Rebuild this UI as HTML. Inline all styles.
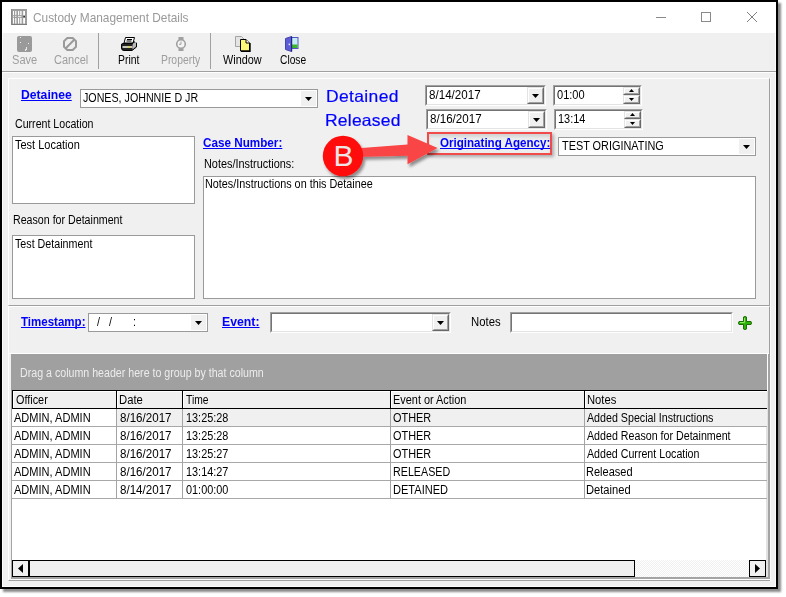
<!DOCTYPE html>
<html lang="en"><head><meta charset="utf-8"><title>Custody Management Details</title>
<style>
html,body{margin:0;padding:0;}
body{width:786px;height:597px;background:#fff;position:relative;overflow:hidden;font:11px/1 "Liberation Sans",Arial,sans-serif;}
.a{position:absolute;box-sizing:border-box;}
.t{position:absolute;white-space:pre;transform-origin:0 50%;text-underline-offset:1px;text-decoration-skip-ink:none;text-decoration-thickness:1px;}
#win{left:0;top:0;width:778px;height:589px;border:2px solid #000;background:#f0f0f0;box-shadow:3px 3px 2px rgba(0,0,0,.46);}
#title{left:2px;top:2px;width:774px;height:31px;background:#fff;}
.flat{background:#fff;border:1px solid #9a9a9a;}
.sunk{background:#fff;border:1px solid;border-color:#a0a0a0 #fff #fff #a0a0a0;}
.sunk:before{content:"";position:absolute;left:0;top:0;right:0;bottom:0;border:1px solid;border-color:#747474 #e3e3e3 #e3e3e3 #747474;}
.btn{background:#f0f0f0;border:1px solid;border-color:#e3e3e3 #696969 #696969 #e3e3e3;}
.btn:before{content:"";position:absolute;left:0;top:0;right:0;bottom:0;border:1px solid;border-color:#fff #a0a0a0 #a0a0a0 #fff;}
.arr{width:7px;height:4px;background:#000;clip-path:polygon(0 0,100% 0,50% 100%);}
.arrs{width:5px;height:3px;background:#000;}
.up{clip-path:polygon(50% 0,100% 100%,0 100%);}
.dn{clip-path:polygon(0 0,100% 0,50% 100%);}
.ddb{background:#f0f0f0;}
.panel{border:1px solid;border-color:#fff #a0a0a0 #a0a0a0 #fff;box-shadow:1px 0 0 #fbfbfb;}
.hl{background:#a8a8a8;height:1px;}
.vl{background:#a4a4a4;width:1px;}
.hc{background:#f0f0f0;border:1px solid #000;box-shadow:inset 1px 1px 0 #fff;}
.sb{background:#f0f0f0;border:1px solid #000;}

</style></head>
<body>
<div id="win" class="a"></div>
<div id="title" class="a"></div>
<div class="a" style="left:2px;top:33px;width:1px;height:554px;background:#fbfbfb"></div>
<div class="a" style="left:775px;top:33px;width:1px;height:554px;background:#fbfbfb"></div>
<div class="a" style="left:2px;top:586px;width:774px;height:1px;background:#fbfbfb"></div>

<!-- title icon : jail bars -->
<svg class="a" style="left:11px;top:9px" width="16" height="16" viewBox="0 0 16 16">
  <rect x="0" y="0" width="16" height="16" fill="#9c9c9c"/>
  <rect x="0" y="15" width="16" height="1" fill="#7c7c7c"/>
  <rect x="0" y="0" width="1" height="16" fill="#888"/>
  <g fill="#fff">
    <rect x="2" y="2" width="1" height="4.2"/><rect x="4.2" y="2" width="1.2" height="4.2"/>
    <rect x="7" y="2" width="1.2" height="4.2"/><rect x="9.2" y="2" width="1.4" height="4.2"/>
    <rect x="12.2" y="2" width="1.8" height="4.2"/>
    <rect x="2" y="9" width="1" height="5.6"/><rect x="4.2" y="9" width="1.2" height="5.6"/>
    <rect x="7" y="9" width="1.2" height="5.6"/><rect x="9.2" y="9" width="1.4" height="5.6"/>
    <rect x="12.2" y="9" width="1.8" height="5.6"/>
  </g>
  <g fill="#e4e4e4">
    <rect x="2" y="7" width="1" height="1.4"/><rect x="4" y="7" width="1.4" height="1"/>
    <rect x="7" y="7" width="3.4" height="1.2"/>
  </g>
  <rect x="12.4" y="7" width="1.6" height="1.2" fill="#303030"/>
</svg>

<!-- window controls -->
<div class="a" style="left:656px;top:17px;width:10px;height:1px;background:#8a8a8a"></div>
<div class="a" style="left:701px;top:12px;width:10px;height:10px;border:1px solid #8a8a8a"></div>
<svg class="a" style="left:746px;top:11px" width="12" height="12" viewBox="0 0 12 12"><path d="M1 1 L11 11 M11 1 L1 11" stroke="#808080" stroke-width="1" fill="none"/></svg>

<!-- toolbar -->
<div class="a" style="left:2px;top:71px;width:774px;height:1px;background:#a0a0a0"></div>
<div class="a" style="left:2px;top:72px;width:774px;height:1px;background:#fff"></div>
<div class="a" style="left:98px;top:33px;width:1px;height:36px;background:#a0a0a0"></div>
<div class="a" style="left:210px;top:33px;width:1px;height:36px;background:#a0a0a0"></div>

<!-- save icon -->
<svg class="a" style="left:17px;top:36px" width="15" height="16" viewBox="0 0 15 16">
  <rect x="0" y="0" width="15" height="16" rx="2" fill="#9a9a9a"/>
  <rect x="3" y="1" width="1" height="1" fill="#f0f0f0"/><rect x="3" y="6" width="1" height="1" fill="#f0f0f0"/>
  <rect x="11" y="7" width="1" height="1" fill="#f0f0f0"/><rect x="9" y="11" width="1" height="3" fill="#e8e8e8"/>
  <rect x="8" y="13" width="1" height="2" fill="#e8e8e8"/>
</svg>
<!-- cancel icon -->
<svg class="a" style="left:63px;top:37px" width="14" height="14" viewBox="0 0 14 14">
  <path d="M4.3 1 H9.7 L13 4.3 V9.7 L9.7 13 H4.3 L1 9.7 V4.3 Z" fill="none" stroke="#9a9a9a" stroke-width="2" stroke-linejoin="round"/>
  <path d="M2.8 11.2 L11.2 2.8" stroke="#9a9a9a" stroke-width="2"/>
</svg>
<!-- print icon -->
<svg class="a" style="left:121px;top:37px" width="16" height="15" viewBox="0 0 16 15">
  <path d="M4.5 0.5 L13.5 0.5 L12 6 L3 6 Z" fill="#fff" stroke="#000"/>
  <path d="M6 2.5 H11 M5.5 4 H10.5" stroke="#000" stroke-width="1"/>
  <path d="M1.5 6.5 Q0.5 6.5 0.5 8 L0.5 11 Q0.5 13.5 3 13.5 L11 13.5 L15.5 10 L15.5 6 L12.5 4.5 L12 6.5 Z" fill="#222" stroke="#000"/>
  <path d="M12 6.5 L15 4.8 L15 9.5 L11.5 12.5 L11.5 8 Z" fill="#b8b8b8"/>
  <rect x="1.5" y="9" width="10" height="2" fill="#c8c8c8"/>
  <rect x="6.5" y="9.5" width="3" height="1" fill="#e8e000"/>
</svg>
<!-- property (watch) icon -->
<svg class="a" style="left:175px;top:37px" width="12" height="14" viewBox="0 0 12 14">
  <rect x="3.5" y="0" width="5" height="3" fill="#a0a0a0"/>
  <rect x="3.5" y="11" width="5" height="3" fill="#a0a0a0"/>
  <circle cx="6" cy="7" r="4.3" fill="#f4f4f4" stroke="#a0a0a0" stroke-width="1.6"/>
  <path d="M6 4.5 V7.3 H4" stroke="#a0a0a0" stroke-width="1" fill="none"/>
</svg>
<!-- window icon -->
<svg class="a" style="left:235px;top:36px" width="16" height="16" viewBox="0 0 16 16">
  <path d="M0.5 0.5 H6.5 L9.5 3.5 V10.5 H0.5 Z" fill="#e4e4e4" stroke="#a4a4a4"/>
  <path d="M5.5 3.5 H11 L14.5 7 V15 H5.5 Z" fill="#fafa78" stroke="#000"/>
  <path d="M6 15.2 H15 V7" fill="none" stroke="#000" stroke-width="1.4"/>
  <path d="M11 3.5 V7 H14.5" fill="#fff" stroke="#000"/>
</svg>
<!-- close (door) icon -->
<svg class="a" style="left:285px;top:36px" width="14" height="16" viewBox="0 0 14 16">
  <rect x="6.5" y="1.5" width="6.5" height="11" fill="#c4ecf4" stroke="#5454c4"/>
  <rect x="7" y="8.5" width="5.5" height="3.5" fill="#3cb42c"/>
  <path d="M0.5 2.5 L6.5 0.5 V15.5 L0.5 13.5 Z" fill="#5c5cd4" stroke="#4444b4" stroke-width="1"/>
  <path d="M6.6 0.5 V15.5" stroke="#24247c" stroke-width="1.2"/>
  <rect x="3.6" y="7.6" width="1.4" height="1.6" fill="#e4e4ff"/>
</svg>

<!-- panels -->
<div class="a panel" style="left:8px;top:78px;width:762px;height:228px"></div>
<div class="a panel" style="left:8px;top:306px;width:762px;height:275px"></div>

<!-- detainee combo -->
<div class="a flat" style="left:80px;top:89px;width:238px;height:19px"></div>
<div class="a ddb" style="left:301px;top:91px;width:15px;height:15px"></div>
<div class="a arr" style="left:305px;top:97px"></div>

<!-- date fields -->
<div class="a sunk" style="left:425px;top:85px;width:121px;height:21px"></div>
<div class="a btn" style="left:527px;top:87px;width:17px;height:17px"></div>
<div class="a arr" style="left:532px;top:94px"></div>
<div class="a sunk" style="left:426px;top:109px;width:121px;height:21px"></div>
<div class="a btn" style="left:528px;top:111px;width:17px;height:17px"></div>
<div class="a arr" style="left:533px;top:118px"></div>

<!-- time fields -->
<div class="a sunk" style="left:553px;top:85px;width:89px;height:21px"></div>
<div class="a btn" style="left:623px;top:87px;width:17px;height:8px"></div>
<div class="a btn" style="left:623px;top:95px;width:17px;height:9px"></div>
<div class="a arrs up" style="left:629px;top:89px"></div>
<div class="a arrs dn" style="left:629px;top:98px"></div>
<div class="a sunk" style="left:554px;top:109px;width:89px;height:21px"></div>
<div class="a btn" style="left:624px;top:111px;width:17px;height:8px"></div>
<div class="a btn" style="left:624px;top:119px;width:17px;height:9px"></div>
<div class="a arrs up" style="left:630px;top:113px"></div>
<div class="a arrs dn" style="left:630px;top:122px"></div>

<!-- text areas -->
<div class="a flat" style="left:12px;top:136px;width:183px;height:68px"></div>
<div class="a flat" style="left:12px;top:235px;width:183px;height:64px"></div>
<div class="a flat" style="left:203px;top:176px;width:553px;height:123px"></div>

<!-- originating agency combo -->
<div class="a flat" style="left:558px;top:137px;width:198px;height:19px"></div>
<div class="a ddb" style="left:739px;top:139px;width:15px;height:15px"></div>
<div class="a arr" style="left:743px;top:145px"></div>

<!-- annotation -->
<div class="a" style="left:427px;top:132px;width:125px;height:23px;border:2px solid #f04a4a;background:#eceeee;box-shadow:2px 2px 3px rgba(0,0,0,.28), inset 0 3px 3px rgba(0,0,0,.10)"></div>
<svg class="a" style="left:315px;top:125px;overflow:visible" width="135" height="60" viewBox="315 125 135 60">
  <defs><filter id="ds" x="-20%" y="-20%" width="150%" height="160%"><feGaussianBlur in="SourceAlpha" stdDeviation="1.6"/><feOffset dx="2" dy="2.5"/><feComponentTransfer><feFuncA type="linear" slope=".42"/></feComponentTransfer><feMerge><feMergeNode/><feMergeNode in="SourceGraphic"/></feMerge></filter></defs>
  <g filter="url(#ds)">
    <path d="M355 148.4 L407.5 144.5 L407.5 135 L437.6 148 L407.5 164.3 L407.5 155.8 L355 157 Z" fill="#f94444"/>
    <circle cx="343" cy="156" r="20.2" fill="#ff0d0d"/>
  </g>
</svg>

<!-- timestamp row -->
<div class="a flat" style="left:88px;top:313px;width:120px;height:19px"></div>
<div class="a ddb" style="left:191px;top:315px;width:15px;height:15px"></div>
<div class="a arr" style="left:195px;top:321px"></div>
<div class="a sunk" style="left:270px;top:312px;width:181px;height:21px"></div>
<div class="a btn" style="left:432px;top:314px;width:17px;height:17px"></div>
<div class="a arr" style="left:437px;top:321px"></div>
<div class="a sunk" style="left:510px;top:312px;width:223px;height:21px"></div>
<!-- plus icon -->
<svg class="a" style="left:738px;top:316px" width="14" height="14" viewBox="0 0 14 14">
  <path d="M5.5 1 Q7 0 8.5 1 V5.5 H13 Q14 7 13 8.5 H8.5 V13 Q7 14 5.5 13 V8.5 H1 Q0 7 1 5.5 H5.5 Z" fill="#2fb40a" stroke="#1c6e04" stroke-width="1"/>
  <path d="M6.5 2 V6.5 H2" stroke="#8fe860" stroke-width="1" fill="none"/>
</svg>

<!-- grid -->
<div class="a" style="left:9px;top:353px;width:760px;height:1px;background:#fff"></div>
<div class="a" style="left:11px;top:354px;width:759px;height:225px;background:#fff;border:solid #a4a4a4;border-width:0 2px 2px 1px;box-shadow:0 1px 0 #fff"></div>
<div class="a" style="left:11px;top:354px;width:756px;height:36px;background:#a0a0a0"></div>
<div class="a" style="left:766px;top:391px;width:2px;height:186px;background:#e2e2e2"></div>
<!-- header -->
<div class="a hc" style="left:12px;top:390px;width:105px;height:19px"></div>
<div class="a hc" style="left:116px;top:390px;width:67px;height:19px"></div>
<div class="a hc" style="left:182px;top:390px;width:209px;height:19px"></div>
<div class="a hc" style="left:390px;top:390px;width:195px;height:19px"></div>
<div class="a hc" style="left:584px;top:390px;width:183px;height:19px;border-right:none"></div>
<!-- selected row bg -->
<div class="a" style="left:117px;top:409px;width:650px;height:17px;background:#f0f0f0"></div>
<!-- row lines -->
<div class="a hl" style="left:12px;top:426px;width:755px"></div>
<div class="a hl" style="left:12px;top:444px;width:755px"></div>
<div class="a hl" style="left:12px;top:462px;width:755px"></div>
<div class="a hl" style="left:12px;top:480px;width:755px"></div>
<div class="a hl" style="left:12px;top:498px;width:755px"></div>
<div class="a vl" style="left:116px;top:409px;height:90px"></div>
<div class="a vl" style="left:182px;top:409px;height:90px"></div>
<div class="a vl" style="left:390px;top:409px;height:90px"></div>
<div class="a vl" style="left:584px;top:409px;height:90px"></div>
<!-- scrollbar -->
<div class="a" style="left:12px;top:560px;width:754px;height:17px;background:repeating-conic-gradient(#f0f0f0 0% 25%, #fff 0% 50%) 0 0/2px 2px"></div>
<div class="a sb" style="left:12px;top:560px;width:17px;height:17px"></div>
<div class="a sb" style="left:29px;top:560px;width:606px;height:17px"></div>
<div class="a sb" style="left:749px;top:560px;width:17px;height:17px"></div>
<svg class="a" style="left:12px;top:560px" width="17" height="17" viewBox="0 0 17 17"><path d="M11 4 V13 L6 8.5 Z" fill="#000"/></svg>
<svg class="a" style="left:749px;top:560px" width="17" height="17" viewBox="0 0 17 17"><path d="M6 4 V13 L11 8.5 Z" fill="#000"/></svg>

<div id="texts">
<span class="t" style="left:32.70px;top:11.00px;font:13px/1 'Liberation Sans', Arial, sans-serif;color:#999;transform:scaleX(0.9121);">Custody Management Details</span>
<span class="t" style="left:11.70px;top:54.00px;font:12.5px/1 'Liberation Sans', Arial, sans-serif;color:#9d9d9d;transform:scaleX(0.8865);">Save</span>
<span class="t" style="left:53.70px;top:54.00px;font:12.5px/1 'Liberation Sans', Arial, sans-serif;color:#9d9d9d;transform:scaleX(0.8785);">Cancel</span>
<span class="t" style="left:117.76px;top:54.00px;font:12.5px/1 'Liberation Sans', Arial, sans-serif;color:#000;transform:scaleX(0.8363);">Print</span>
<span class="t" style="left:160.87px;top:54.00px;font:12.5px/1 'Liberation Sans', Arial, sans-serif;color:#9d9d9d;transform:scaleX(0.8299);">Property</span>
<span class="t" style="left:223.30px;top:54.00px;font:12.5px/1 'Liberation Sans', Arial, sans-serif;color:#000;transform:scaleX(0.8695);">Window</span>
<span class="t" style="left:279.60px;top:54.00px;font:12.5px/1 'Liberation Sans', Arial, sans-serif;color:#000;transform:scaleX(0.8186);">Close</span>
<span class="t" style="left:21.20px;top:89.00px;font:bold 12.5px/1 'Liberation Sans', Arial, sans-serif;color:#0000ff;transform:scaleX(0.9740);text-decoration:underline;">Detainee</span>
<span class="t" style="left:82.90px;top:92.00px;font:12.5px/1 'Liberation Sans', Arial, sans-serif;color:#000;transform:scaleX(0.8544);">JONES, JOHNNIE D JR</span>
<span class="t" style="left:325.84px;top:88.00px;font:16.5px/1 'Liberation Sans', Arial, sans-serif;color:#0000ff;letter-spacing:0.328px;transform:scaleX(1.0600);-webkit-text-stroke:0.2px #0000ff;">Detained</span>
<span class="t" style="left:324.84px;top:112.00px;font:16.5px/1 'Liberation Sans', Arial, sans-serif;color:#0000ff;letter-spacing:0.209px;transform:scaleX(1.0600);-webkit-text-stroke:0.2px #0000ff;">Released</span>
<span class="t" style="left:428.80px;top:89.00px;font:12.5px/1 'Liberation Sans', Arial, sans-serif;color:#000;transform:scaleX(0.9289);">8/14/2017</span>
<span class="t" style="left:429.70px;top:113.00px;font:12.5px/1 'Liberation Sans', Arial, sans-serif;color:#000;transform:scaleX(0.9289);">8/16/2017</span>
<span class="t" style="left:556.50px;top:89.00px;font:12.5px/1 'Liberation Sans', Arial, sans-serif;color:#000;transform:scaleX(0.8842);">01:00</span>
<span class="t" style="left:557.60px;top:113.00px;font:12.5px/1 'Liberation Sans', Arial, sans-serif;color:#000;transform:scaleX(0.8746);">13:14</span>
<span class="t" style="left:15.30px;top:118.00px;font:12.5px/1 'Liberation Sans', Arial, sans-serif;color:#000;transform:scaleX(0.8490);">Current Location</span>
<span class="t" style="left:15.30px;top:139.00px;font:12.5px/1 'Liberation Sans', Arial, sans-serif;color:#000;transform:scaleX(0.8792);">Test Location</span>
<span class="t" style="left:203.40px;top:137.00px;font:bold 12.5px/1 'Liberation Sans', Arial, sans-serif;color:#0000ff;transform:scaleX(0.9356);text-decoration:underline;">Case Number:</span>
<span class="t" style="left:439.80px;top:137.00px;font:bold 12.5px/1 'Liberation Sans', Arial, sans-serif;color:#0000ff;transform:scaleX(0.9265);text-decoration:underline;">Originating Agency:</span>
<span class="t" style="left:562.00px;top:140.00px;font:12.5px/1 'Liberation Sans', Arial, sans-serif;color:#000;transform:scaleX(0.8702);">TEST ORIGINATING</span>
<span class="t" style="left:203.83px;top:158.00px;font:12.5px/1 'Liberation Sans', Arial, sans-serif;color:#000;transform:scaleX(0.8722);">Notes/Instructions:</span>
<span class="t" style="left:204.83px;top:178.00px;font:12.5px/1 'Liberation Sans', Arial, sans-serif;color:#000;transform:scaleX(0.8657);">Notes/Instructions on this Detainee</span>
<span class="t" style="left:12.85px;top:214.00px;font:12.5px/1 'Liberation Sans', Arial, sans-serif;color:#000;transform:scaleX(0.8519);">Reason for Detainment</span>
<span class="t" style="left:15.30px;top:238.00px;font:12.5px/1 'Liberation Sans', Arial, sans-serif;color:#000;transform:scaleX(0.8564);">Test Detainment</span>
<span class="t" style="left:21.20px;top:316.00px;font:bold 12.5px/1 'Liberation Sans', Arial, sans-serif;color:#0000ff;transform:scaleX(0.9220);text-decoration:underline;">Timestamp:</span>
<span class="t" style="left:96.80px;top:316.00px;font:12.5px/1 'Liberation Sans', Arial, sans-serif;color:#000;transform:scaleX(0.8550);">/</span>
<span class="t" style="left:109.40px;top:316.00px;font:12.5px/1 'Liberation Sans', Arial, sans-serif;color:#000;transform:scaleX(0.8550);">/</span>
<span class="t" style="left:133.15px;top:316.00px;font:12.5px/1 'Liberation Sans', Arial, sans-serif;color:#000;transform:scaleX(0.8550);">:</span>
<span class="t" style="left:221.50px;top:316.00px;font:bold 12.5px/1 'Liberation Sans', Arial, sans-serif;color:#0000ff;transform:scaleX(0.9827);text-decoration:underline;">Event:</span>
<span class="t" style="left:470.59px;top:316.00px;font:12.5px/1 'Liberation Sans', Arial, sans-serif;color:#000;transform:scaleX(0.9075);">Notes</span>
<span class="t" style="left:20.05px;top:367.00px;font:12.5px/1 'Liberation Sans', Arial, sans-serif;color:#ececec;transform:scaleX(0.8513);">Drag a column header here to group by that column</span>
<span class="t" style="left:333.60px;top:141.00px;font:30px/1 'Liberation Sans', Arial, sans-serif;color:#ece6e6;">B</span>
<span class="t" style="left:15.50px;top:394.00px;font:12.5px/1 'Liberation Sans', Arial, sans-serif;color:#000;transform:scaleX(0.8676);">Officer</span>
<span class="t" style="left:118.80px;top:394.00px;font:12.5px/1 'Liberation Sans', Arial, sans-serif;color:#000;transform:scaleX(0.9037);">Date</span>
<span class="t" style="left:186.30px;top:394.00px;font:12.5px/1 'Liberation Sans', Arial, sans-serif;color:#000;transform:scaleX(0.8223);">Time</span>
<span class="t" style="left:392.63px;top:394.00px;font:12.5px/1 'Liberation Sans', Arial, sans-serif;color:#000;transform:scaleX(0.8734);">Event or Action</span>
<span class="t" style="left:586.60px;top:394.00px;font:12.5px/1 'Liberation Sans', Arial, sans-serif;color:#000;transform:scaleX(0.8980);">Notes</span>
<span class="t" style="left:14.30px;top:412.00px;font:12.5px/1 'Liberation Sans', Arial, sans-serif;color:#000;transform:scaleX(0.8826);">ADMIN, ADMIN</span>
<span class="t" style="left:119.70px;top:412.00px;font:12.5px/1 'Liberation Sans', Arial, sans-serif;color:#000;transform:scaleX(0.9271);">8/16/2017</span>
<span class="t" style="left:185.80px;top:412.00px;font:12.5px/1 'Liberation Sans', Arial, sans-serif;color:#000;transform:scaleX(0.8705);">13:25:28</span>
<span class="t" style="left:393.00px;top:412.00px;font:12.5px/1 'Liberation Sans', Arial, sans-serif;color:#000;transform:scaleX(0.8714);">OTHER</span>
<span class="t" style="left:587.20px;top:412.00px;font:12.5px/1 'Liberation Sans', Arial, sans-serif;color:#000;transform:scaleX(0.8541);">Added Special Instructions</span>
<span class="t" style="left:14.30px;top:430.00px;font:12.5px/1 'Liberation Sans', Arial, sans-serif;color:#000;transform:scaleX(0.8826);">ADMIN, ADMIN</span>
<span class="t" style="left:119.70px;top:430.00px;font:12.5px/1 'Liberation Sans', Arial, sans-serif;color:#000;transform:scaleX(0.9271);">8/16/2017</span>
<span class="t" style="left:185.80px;top:430.00px;font:12.5px/1 'Liberation Sans', Arial, sans-serif;color:#000;transform:scaleX(0.8705);">13:25:28</span>
<span class="t" style="left:393.00px;top:430.00px;font:12.5px/1 'Liberation Sans', Arial, sans-serif;color:#000;transform:scaleX(0.8714);">OTHER</span>
<span class="t" style="left:587.20px;top:430.00px;font:12.5px/1 'Liberation Sans', Arial, sans-serif;color:#000;transform:scaleX(0.8537);">Added Reason for Detainment</span>
<span class="t" style="left:14.30px;top:448.00px;font:12.5px/1 'Liberation Sans', Arial, sans-serif;color:#000;transform:scaleX(0.8826);">ADMIN, ADMIN</span>
<span class="t" style="left:119.70px;top:448.00px;font:12.5px/1 'Liberation Sans', Arial, sans-serif;color:#000;transform:scaleX(0.9271);">8/16/2017</span>
<span class="t" style="left:185.80px;top:448.00px;font:12.5px/1 'Liberation Sans', Arial, sans-serif;color:#000;transform:scaleX(0.8705);">13:25:27</span>
<span class="t" style="left:393.00px;top:448.00px;font:12.5px/1 'Liberation Sans', Arial, sans-serif;color:#000;transform:scaleX(0.8714);">OTHER</span>
<span class="t" style="left:587.20px;top:448.00px;font:12.5px/1 'Liberation Sans', Arial, sans-serif;color:#000;transform:scaleX(0.8518);">Added Current Location</span>
<span class="t" style="left:14.30px;top:466.00px;font:12.5px/1 'Liberation Sans', Arial, sans-serif;color:#000;transform:scaleX(0.8826);">ADMIN, ADMIN</span>
<span class="t" style="left:119.70px;top:466.00px;font:12.5px/1 'Liberation Sans', Arial, sans-serif;color:#000;transform:scaleX(0.9271);">8/16/2017</span>
<span class="t" style="left:185.80px;top:466.00px;font:12.5px/1 'Liberation Sans', Arial, sans-serif;color:#000;transform:scaleX(0.8705);">13:14:27</span>
<span class="t" style="left:392.64px;top:466.00px;font:12.5px/1 'Liberation Sans', Arial, sans-serif;color:#000;transform:scaleX(0.8574);">RELEASED</span>
<span class="t" style="left:586.32px;top:466.00px;font:12.5px/1 'Liberation Sans', Arial, sans-serif;color:#000;transform:scaleX(0.8831);">Released</span>
<span class="t" style="left:14.30px;top:484.00px;font:12.5px/1 'Liberation Sans', Arial, sans-serif;color:#000;transform:scaleX(0.8826);">ADMIN, ADMIN</span>
<span class="t" style="left:119.70px;top:484.00px;font:12.5px/1 'Liberation Sans', Arial, sans-serif;color:#000;transform:scaleX(0.9271);">8/14/2017</span>
<span class="t" style="left:185.80px;top:484.00px;font:12.5px/1 'Liberation Sans', Arial, sans-serif;color:#000;transform:scaleX(0.8705);">01:00:00</span>
<span class="t" style="left:392.62px;top:484.00px;font:12.5px/1 'Liberation Sans', Arial, sans-serif;color:#000;transform:scaleX(0.8849);">DETAINED</span>
<span class="t" style="left:586.31px;top:484.00px;font:12.5px/1 'Liberation Sans', Arial, sans-serif;color:#000;transform:scaleX(0.8923);">Detained</span>
</div>
</body></html>
